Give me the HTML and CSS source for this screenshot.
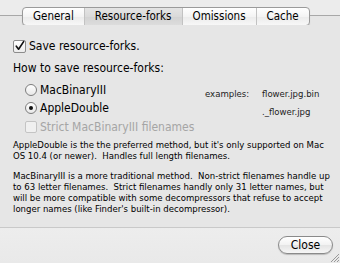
FILE: index.html
```html
<!DOCTYPE html>
<html lang="en">
<head>
    <meta charset="UTF-8">
    <title>Resource-forks</title>
    <link rel="stylesheet" href="styles.css">
</head>
<body>
    <div class="window">
        <div class="tab-bar">
            <div class="tab-line tab-line-left"></div>
            <div class="tabs">
                <div class="tab">General</div>
                <div class="tab tab-selected">Resource-forks</div>
                <div class="tab">Omissions</div>
                <div class="tab">Cache</div>
            </div>
            <div class="tab-line"></div>
        </div>

        <div class="panel">
            <label class="check-row">
                <span class="checkbox checked">
                    <svg width="12" height="12" viewBox="0 0 12 12"><path d="M2.5 6.2 L5 9.5 L10.5 1.2" fill="none" stroke="#111" stroke-width="1.8" stroke-linecap="round" stroke-linejoin="round"/></svg>
                </span>
                <span class="label">Save resource-forks.</span>
            </label>

            <div class="section-title">How to save resource-forks:</div>

            <div class="options">
                <div class="radios">
                    <div class="radio-row"><span class="radio"></span><span class="label">MacBinaryIII</span></div>
                    <div class="radio-row"><span class="radio selected"></span><span class="label">AppleDouble</span></div>
                    <div class="check-row disabled"><span class="checkbox small"></span><span class="label">Strict MacBinaryIII filenames</span></div>
                </div>
                <div class="examples">
                    <span class="examples-label">examples:</span>
                    <div class="examples-list">
                        <span>flower.jpg.bin</span>
                        <span>._flower.jpg</span>
                    </div>
                </div>
            </div>

            <p class="note">AppleDouble is the the preferred method, but it's only supported on Mac OS 10.4 (or newer).&nbsp; Handles full length filenames.</p>
            <p class="note">MacBinaryIII is a more traditional method.&nbsp; Non-strict filenames handle up to 63 letter filenames.&nbsp; Strict filenames handly only 31 letter names, but will be more compatible with some decompressors that refuse to accept longer names (like Finder's built-in decompressor).</p>
        </div>

        <div class="footer">
            <button class="close-btn">Close</button>
            <svg class="grip" width="12" height="12" viewBox="0 0 12 12">
                <path d="M11 3 L3 11 M11 6 L6 11 M11 9 L9 11" stroke="#999" stroke-width="1"/>
            </svg>
        </div>
    </div>
</body>
</html>
```

FILE: styles.css
```css
body {
    margin: 0;
    padding: 0;
    background: #ececec;
    color: #000;
    font-family: 'DejaVu Sans Condensed', 'DejaVu Sans', sans-serif;
    width: 340px;
    height: 263px;
    overflow: hidden;
}

.window {
    display: flex;
    flex-direction: column;
    height: 263px;
}

.tab-bar {
    display: flex;
    align-items: center;
    margin-top: 7px;
    height: 18px;
    background: linear-gradient(#ececec 0, #ececec 8px, #e6e6e6 8px);
}

.tab-line {
    flex: 1;
    height: 1px;
    background: #a8a8a8;
    margin-bottom: 2px;
}

.tab-line-left {
    flex: 0 0 22px;
}

.tabs {
    display: flex;
    height: 17px;
    border: 1px solid #9a9a9a;
    border-radius: 4px;
    background: linear-gradient(#ffffff, #f4f4f4 50%, #ebebeb 51%, #f7f7f7);
    box-shadow: 0 1px 1px rgba(0, 0, 0, 0.15);
    overflow: hidden;
}

.tab {
    display: flex;
    align-items: center;
    justify-content: center;
    font-size: 11.5px;
    padding: 0 10px;
    border-left: 1px solid #c2c2c2;
}

.tab:first-child {
    border-left: none;
}

.tab-selected {
    background: linear-gradient(#e4e4e4, #dadada 50%, #d2d2d2 51%, #dcdcdc);
}

.panel {
    background: #e6e6e6;
    height: 203px;
    border-bottom: 1px solid #c9c9c9;
    padding: 14px 0 0 13px;
    box-sizing: border-box;
}

.check-row {
    display: flex;
    align-items: center;
}

.checkbox {
    width: 11px;
    height: 11px;
    border: 1px solid #8c8c8c;
    border-radius: 2px;
    background: linear-gradient(#ffffff, #ececec);
    display: flex;
    align-items: center;
    justify-content: center;
    box-sizing: content-box;
}

.label {
    margin-left: 3px;
    font-size: 12px;
}

.section-title {
    font-size: 12px;
    margin-top: 8px;
}

.options {
    display: flex;
    margin-top: 6px;
}

.radios {
    padding-left: 12px;
    width: 180px;
    flex-shrink: 0;
}

.radio-row {
    display: flex;
    align-items: center;
    height: 18px;
}

.radio {
    width: 10px;
    height: 10px;
    border: 1px solid #7d7d7d;
    border-radius: 50%;
    background: linear-gradient(#ffffff, #e8e8e8);
    display: flex;
    align-items: center;
    justify-content: center;
}

.radio.selected::after {
    content: '';
    width: 4px;
    height: 4px;
    border-radius: 50%;
    background: #111;
}

.check-row.disabled {
    margin-top: 1px;
    height: 18px;
    white-space: nowrap;
}

.checkbox.small {
    width: 10px;
    height: 10px;
    border-color: #c4c4c4;
    background: #f0f0f0;
}

.disabled .label {
    color: #a5a5a5;
}

.examples {
    display: flex;
    font-size: 9.5px;
    color: #222;
    margin-top: 4px;
}

.examples-label {
    width: 57px;
    line-height: 18px;
}

.examples-list {
    display: flex;
    flex-direction: column;
    line-height: 18px;
}

.note {
    font-size: 9.5px;
    line-height: 11px;
    margin: 3px 6px 0 0;
}

.note + .note {
    margin-top: 9px;
}

.footer {
    flex: 1;
    display: flex;
    justify-content: flex-end;
    align-items: flex-start;
    position: relative;
    background: linear-gradient(#ededed, #e9e9e9);
}

.close-btn {
    margin: 8px 7px 0 0;
    width: 55px;
    height: 18px;
    border: 1px solid #8a8a8a;
    border-radius: 9px;
    background: linear-gradient(#ffffff, #f2f2f2 50%, #e4e4e4 51%, #f6f6f6);
    font-family: 'DejaVu Sans Condensed', 'DejaVu Sans', sans-serif;
    font-size: 12px;
    color: #000;
    padding: 0;
    box-shadow: 0 1px 1px rgba(0, 0, 0, 0.2);
}

.grip {
    position: absolute;
    right: 0;
    bottom: 0;
}
```
